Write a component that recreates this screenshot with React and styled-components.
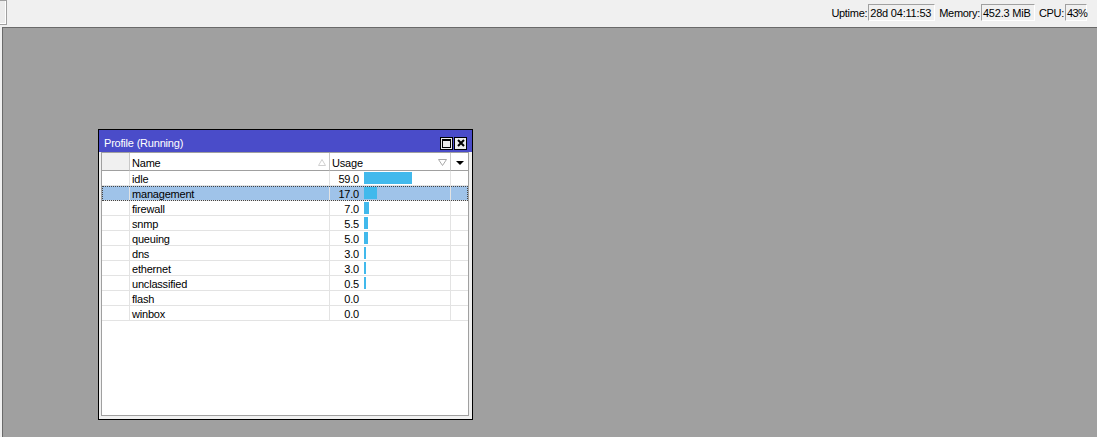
import React from 'react'
import styled, { createGlobalStyle } from 'styled-components'

const GlobalStyle = createGlobalStyle`
   html, body {
      margin: 0;
      padding: 0;
      background: #f0f0f0;
   }
   body {
      font-family: "Liberation Sans", Arial, sans-serif;
      font-size: 11px;
      letter-spacing: -0.2px;
      color: #000;
   }
`

const Page = styled.div`
   display: flex;
   flex-direction: column;
   width: 100%;
   height: 100vh;
   background: #f0f0f0;
`

const TopBar = styled.div`
   display: flex;
   align-items: flex-start;
   height: 27px;
   flex: 0 0 27px;
`

const StubButton = styled.div`
   width: 6px;
   height: 23px;
   border: 1px solid #a0a0a0;
   border-left: none;
   box-shadow: inset -1px -1px 0 #fff;
   background: #ececec;
`

const Status = styled.div`
   display: flex;
   align-items: center;
   margin-left: auto;
   margin-top: 4px;
   padding-right: 10px;
   height: 17px;
`

const StatusLabel = styled.span`
   margin-left: ${p => p.first ? '0' : '4px'};
   line-height: 17px;
   padding-top: 1px;
   letter-spacing: -0.3px;
`

const StatusBox = styled.span`
   display: inline-block;
   box-sizing: border-box;
   width: ${p => p.w}px;
   height: 17px;
   line-height: 16px;
   padding: 0 0 0 1px;
   border: 1px solid #fff;
   border-left-color: #a0a0a0;
   border-top-color: #a0a0a0;
   margin-left: 1px;
   white-space: nowrap;
   letter-spacing: ${p => p.tight ? '-0.6px' : '-0.2px'};
`

const Workspace = styled.div`
   position: relative;
   flex: 1;
   margin-left: 2px;
   background: #a0a0a0;
   border-left: 1px solid #6a6a6a;
   border-top: 1px solid #6a6a6a;
   overflow: hidden;
`

const Window = styled.div`
   position: absolute;
   left: 95px;
   top: 101px;
   width: 375px;
   height: 291px;
   box-sizing: border-box;
   border: 1px solid #000;
   background: #f0f0f0;
   display: flex;
   flex-direction: column;
`

const TitleBar = styled.div`
   display: flex;
   align-items: center;
   height: 22px;
   flex: 0 0 22px;
   background: #4a4cc9;
   color: #fff;
   padding: 0 5px;
`

const Title = styled.span`
   flex: 1;
   margin-top: 4px;
`

const TitleButtons = styled.div`
   display: flex;
   gap: 1px;
   margin-top: 4px;
`

const TitleButton = styled.div`
   display: flex;
   align-items: center;
   justify-content: center;
   width: 13px;
   height: 13px;
   box-sizing: border-box;
   border: 1px solid #000;
   background: #ececec;
`

const Body = styled.div`
   flex: 1;
   padding: 0 3px 3px 2px;
   display: flex;
`

const Table = styled.div`
   flex: 1;
   background: #fff;
   border: 1px solid #a0a0a0;
`

const Row = styled.div`
   display: grid;
   grid-template-columns: 28px 200px 121px 17px;
   height: ${p => p.header ? '18px' : '15px'};
   box-sizing: border-box;
   background: ${p => p.selected ? '#9fc3e9' : 'transparent'};
   outline: ${p => p.selected ? '1px dotted #444' : 'none'};
   outline-offset: -1px;
`

const Cell = styled.div`
   display: flex;
   align-items: center;
   box-sizing: border-box;
   padding-left: ${p => p.pad || 0}px;
   padding-top: ${p => p.header ? 3 : 1}px;
   border-right: 1px solid ${p => p.header ? '#c8c8c8' : '#e3e3e3'};
   border-bottom: 1px solid ${p => p.header ? '#a0a0a0' : '#e3e3e3'};
   background: ${p => p.shade ? '#f0f0f0' : 'transparent'};
   white-space: nowrap;
   overflow: hidden;

   &:last-child {
      border-right: none;
   }
`

const HeadText = styled.span`
   flex: 1;
`

const SortMark = styled.svg`
   flex: 0 0 auto;
   margin-right: 3px;
   margin-top: -1px;
`

const Value = styled.span`
   width: 29px;
   text-align: right;
   flex: 0 0 29px;
`

const Bar = styled.div`
   height: 12px;
   margin-left: 5px;
   margin-top: -1px;
   background: #41b9ec;
`

const rows = [
   ['idle', 59.0],
   ['management', 17.0],
   ['firewall', 7.0],
   ['snmp', 5.5],
   ['queuing', 5.0],
   ['dns', 3.0],
   ['ethernet', 3.0],
   ['unclassified', 0.5],
   ['flash', 0.0],
   ['winbox', 0.0],
]

const barWidth = v => v > 0 ? Math.max(2, Math.floor(v * 0.815)) : 0

const App = () => {
   return (
      <Page>
         <GlobalStyle />
         <TopBar>
            <StubButton />
            <Status>
               <StatusLabel first>Uptime:</StatusLabel>
               <StatusBox w={67}>28d 04:11:53</StatusBox>
               <StatusLabel>Memory:</StatusLabel>
               <StatusBox w={54}>452.3 MiB</StatusBox>
               <StatusLabel>CPU:</StatusLabel>
               <StatusBox w={22} tight>43%</StatusBox>
            </Status>
         </TopBar>
         <Workspace>
            <Window>
               <TitleBar>
                  <Title>Profile (Running)</Title>
                  <TitleButtons>
                     <TitleButton>
                        <svg width="9" height="9" viewBox="0 0 9 9">
                           <rect x="0.5" y="0.5" width="8" height="8" fill="none" stroke="#000" strokeWidth="1" />
                           <path d="M0.5 1.5 L8.5 1.5" stroke="#000" strokeWidth="1" />
                        </svg>
                     </TitleButton>
                     <TitleButton>
                        <svg width="8" height="8" viewBox="0 0 8 8">
                           <path d="M1 1 L7 7 M7 1 L1 7" stroke="#000" strokeWidth="2" />
                        </svg>
                     </TitleButton>
                  </TitleButtons>
               </TitleBar>
               <Body>
                  <Table>
                     <Row header>
                        <Cell header shade />
                        <Cell header pad={2}>
                           <HeadText>Name</HeadText>
                           <SortMark width="8" height="7" viewBox="0 0 8 7">
                              <path d="M4 0.5 L7.5 6.5 L0.5 6.5 Z" fill="none" stroke="#d0d0d0" />
                           </SortMark>
                        </Cell>
                        <Cell header pad={2}>
                           <HeadText>Usage</HeadText>
                           <SortMark width="9" height="7" viewBox="0 0 9 7">
                              <path d="M0.5 0.5 L8.5 0.5 L4.5 6.5 Z" fill="none" stroke="#a8a8a8" />
                           </SortMark>
                        </Cell>
                        <Cell header>
                           <svg width="16" height="6" viewBox="0 0 16 6">
                              <path d="M5 1 L13 1 L9 5 Z" fill="#000" />
                           </svg>
                        </Cell>
                     </Row>
                     {rows.map(([name, v]) => (
                        <Row key={name} selected={name === 'management'}>
                           <Cell />
                           <Cell pad={2}>{name}</Cell>
                           <Cell>
                              <Value>{v.toFixed(1)}</Value>
                              {v > 0 && <Bar style={{ width: barWidth(v) }} />}
                           </Cell>
                           <Cell />
                        </Row>
                     ))}
                  </Table>
               </Body>
            </Window>
         </Workspace>
      </Page>
   )
}

export default App
